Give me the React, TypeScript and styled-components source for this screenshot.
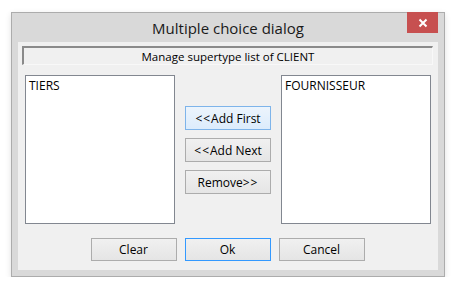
import styled, { createGlobalStyle } from 'styled-components'

const GlobalStyle = createGlobalStyle`
  html, body {
    margin: 0;
    padding: 0;
    background: #ffffff;
  }
  body {
    font-family: 'Open Sans', 'Noto Sans', 'Liberation Sans', sans-serif;
  }
`

const Window = styled.div`
  position: relative;
  box-sizing: border-box;
  margin: 12px 0 0 11px;
  width: 434px;
  height: 265px;
  border: 1px solid #acacac;
  background: #d9d9d9;
  box-shadow: 0 2px 6px rgba(0, 0, 0, 0.12);
  display: flex;
  flex-direction: column;
`

const TitleBar = styled.div`
  height: 29px;
  display: flex;
  align-items: center;
  justify-content: center;
  font-size: 15px;
  color: #1a1a1a;
`

const CloseButton = styled.div`
  position: absolute;
  top: -1px;
  right: 6px;
  width: 31px;
  height: 21px;
  background: #c75050;
  display: flex;
  align-items: center;
  justify-content: center;
`

const Client = styled.div`
  box-sizing: border-box;
  margin: 0 6px 6px;
  height: 228px;
  background: #f0f0f0;
  padding: 4px 5px 0 4px;
  display: flex;
  flex-direction: column;
`

const Header = styled.div`
  box-sizing: border-box;
  height: 19px;
  border-style: solid;
  border-width: 2px 1px 1px 2px;
  border-color: #8a8a8a #f8f8f8 #f8f8f8 #8a8a8a;
  background: #f0f0f0;
  display: flex;
  align-items: center;
  justify-content: center;
  font-size: 11.5px;
  color: #000;
`

const Main = styled.div`
  display: grid;
  grid-template-columns: 150px 86px 150px;
  column-gap: 10px;
  margin: 10px 0 0 3px;
`

const ListBox = styled.div`
  box-sizing: border-box;
  height: 149px;
  border: 1px solid #828790;
  background: #ffffff;
  padding: 2px 3px;
  font-size: 12px;
  line-height: 16px;
  color: #000;
`

const ButtonColumn = styled.div`
  display: flex;
  flex-direction: column;
  gap: 8px;
  padding-top: 31px;
`

const Footer = styled.div`
  display: flex;
  justify-content: center;
  gap: 8px;
  margin-top: 14px;
`

const Arrows = styled.span`
  letter-spacing: 1px;
`

const Button = styled.button<{ $state?: 'hover' | 'focus'; $h?: number }>`
  box-sizing: border-box;
  width: 86px;
  height: ${({ $h }) => $h ?? 24}px;
  padding: 0;
  font-family: inherit;
  font-size: 12px;
  color: #000;
  border: 1px solid
    ${({ $state }) => ($state === 'hover' ? '#7eb4ea' : $state === 'focus' ? '#3399ff' : '#acacac')};
  background: ${({ $state }) =>
    $state === 'hover' ? 'linear-gradient(#ecf4fc, #dcecfc)' : 'linear-gradient(#f0f0f0, #e5e5e5)'};
`

export default function App() {
  return (
    <>
      <GlobalStyle />
      <Window>
        <TitleBar>Multiple choice dialog</TitleBar>
        <CloseButton>
          <svg width="10" height="10" viewBox="0 0 10 10">
            <path d="M1.5 1.5 L8.5 8.5 M8.5 1.5 L1.5 8.5" stroke="#fff" strokeWidth="2" />
          </svg>
        </CloseButton>
        <Client>
          <Header>Manage supertype list of CLIENT</Header>
          <Main>
            <ListBox>TIERS</ListBox>
            <ButtonColumn>
              <Button $state="hover">
                <Arrows>&lt;&lt;</Arrows>Add First
              </Button>
              <Button>
                <Arrows>&lt;&lt;</Arrows>Add Next
              </Button>
              <Button>
                Remove<Arrows>&gt;&gt;</Arrows>
              </Button>
            </ButtonColumn>
            <ListBox>FOURNISSEUR</ListBox>
          </Main>
          <Footer>
            <Button $h={23}>Clear</Button>
            <Button $h={23} $state="focus">
              Ok
            </Button>
            <Button $h={23}>Cancel</Button>
          </Footer>
        </Client>
      </Window>
    </>
  )
}
